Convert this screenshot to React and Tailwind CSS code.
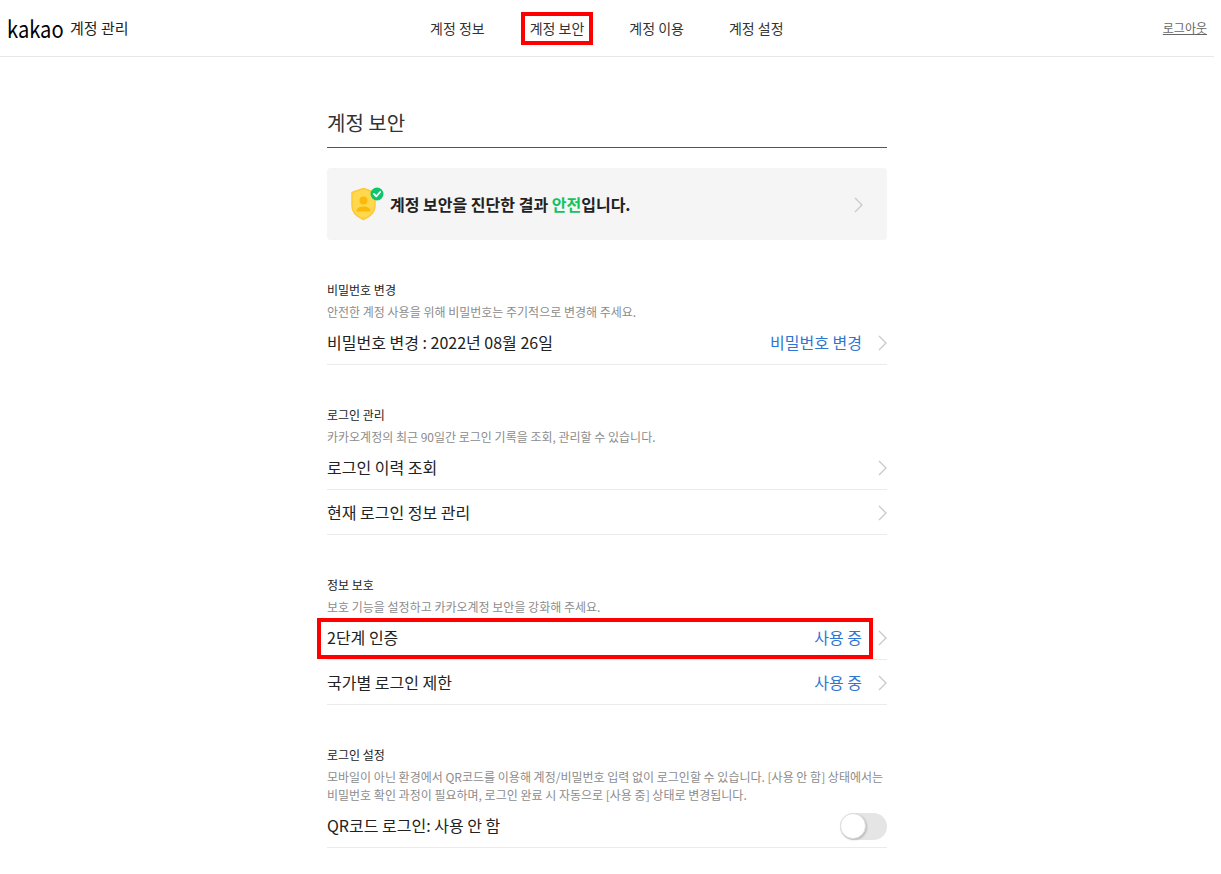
const font = { fontFamily: '"Noto Sans CJK KR", "Noto Sans", sans-serif' };

const Chevron = ({ className }) => (
  <svg width="9" height="16" viewBox="0 0 9 16" fill="none" className={`mt-[2px] ${className || ''}`}>
    <path d="M1 1 L8 8 L1 15" stroke="#c9c9c9" strokeWidth="1.3" />
  </svg>
);

const Row = ({ label, value, noArrow, children }) => (
  <div className="flex h-[45px] items-center border-b border-[#ebebeb]">
    <span className="flex-1 text-[16px] text-[#222]">{label}</span>
    {value && <span className="mr-[16px] text-[16px] text-[#2f76d2]">{value}</span>}
    {!noArrow && <Chevron className="shrink-0" />}
    {children}
  </div>
);

const Section = ({ title, desc, children }) => (
  <section className="mt-[41px]">
    <h3 className="text-[12px] leading-[18px] text-[#222]">{title}</h3>
    <p className="mb-[-1px] mt-[4px] text-[12px] leading-[18px] text-[#8c8c8c]">{desc}</p>
    {children}
  </section>
);

const ShieldIcon = () => (
  <svg width="34" height="36" viewBox="0 0 34 36" className="shrink-0">
    <path d="M12.5 2.5 L24 6.5 V20 C24 26.5 18.5 31 12.5 33.5 C6.5 31 1 26.5 1 20 V6.5 Z" fill="#ffd84d" stroke="#fcc934" strokeWidth="1.5" strokeLinejoin="round" />
    <circle cx="12.5" cy="14.5" r="4" fill="#fdb90b" />
    <path d="M5.5 25.5 C5.5 21.5 9 20.5 12.5 20.5 C16 20.5 19.5 21.5 19.5 25.5 Z" fill="#fdb90b" />
    <circle cx="26" cy="8" r="6.5" fill="#0fc46b" />
    <path d="M23 8 L25.3 10.3 L29.2 6" fill="none" stroke="#fff" strokeWidth="1.8" strokeLinecap="round" strokeLinejoin="round" />
  </svg>
);

export default function App() {
  return (
    <div className="relative h-[874px] w-[1214px] overflow-hidden bg-white" style={font}>
      <header className="relative flex h-[57px] items-center border-b border-[#e8e8e8] pl-[7px] pr-[7px]">
        <div className="flex w-[423px] items-center">
          <span className="inline-block w-[56px] origin-left scale-x-[.875] text-[23px] leading-none text-black">kakao</span>
          <span className="ml-[7px] text-[15px] text-[#222]">계정 관리</span>
        </div>
        <nav className="flex flex-1 gap-[45px] text-[14px] text-[#333]">
          <span>계정 정보</span>
          <span>계정 보안</span>
          <span>계정 이용</span>
          <span>계정 설정</span>
        </nav>
        <span className="text-[12px] text-[#666] underline">로그아웃</span>
      </header>

      {/* annotation boxes */}
      <div className="absolute left-[521px] top-[12px] h-[33px] w-[72px] border-[4px] border-[#ff0000]" />
      <div className="absolute left-[317px] top-[618px] h-[41px] w-[556px] border-[4px] border-[#ff0000]" />

      <main className="mx-auto w-[560px]">
        <h2 className="mt-[51px] border-b border-[#555] pb-[9px] text-[20px] leading-[30px] text-[#333]">계정 보안</h2>

        <div className="mt-[20px] flex h-[72px] items-center rounded-[4px] bg-[#f5f5f5] pl-[24px] pr-[24px]">
          <ShieldIcon />
          <p className="ml-[5px] flex-1 text-[16px] font-bold text-[#222]">
            계정 보안을 진단한 결과 <span className="text-[#10c45f]">안전</span>입니다.
          </p>
          <Chevron />
        </div>

        <Section title="비밀번호 변경" desc="안전한 계정 사용을 위해 비밀번호는 주기적으로 변경해 주세요.">
          <Row label="비밀번호 변경 : 2022년 08월 26일" value="비밀번호 변경" />
        </Section>

        <Section title="로그인 관리" desc="카카오계정의 최근 90일간 로그인 기록을 조회, 관리할 수 있습니다.">
          <Row label="로그인 이력 조회" />
          <Row label="현재 로그인 정보 관리" />
        </Section>

        <Section title="정보 보호" desc="보호 기능을 설정하고 카카오계정 보안을 강화해 주세요.">
          <Row label="2단계 인증" value="사용 중" />
          <Row label="국가별 로그인 제한" value="사용 중" />
        </Section>

        <Section
          title="로그인 설정"
          desc="모바일이 아닌 환경에서 QR코드를 이용해 계정/비밀번호 입력 없이 로그인할 수 있습니다. [사용 안 함] 상태에서는 비밀번호 확인 과정이 필요하며, 로그인 완료 시 자동으로 [사용 중] 상태로 변경됩니다."
        >
          <Row label="QR코드 로그인: 사용 안 함" noArrow>
            <div className="mt-[2px] flex h-[27px] w-[47px] items-center rounded-full bg-[#e5e5e5]">
              <div className="h-[26px] w-[26px] rounded-full border border-[#ddd] bg-white shadow-[1px_1px_2px_rgba(0,0,0,0.2)]" />
            </div>
          </Row>
        </Section>
      </main>
    </div>
  );
}
